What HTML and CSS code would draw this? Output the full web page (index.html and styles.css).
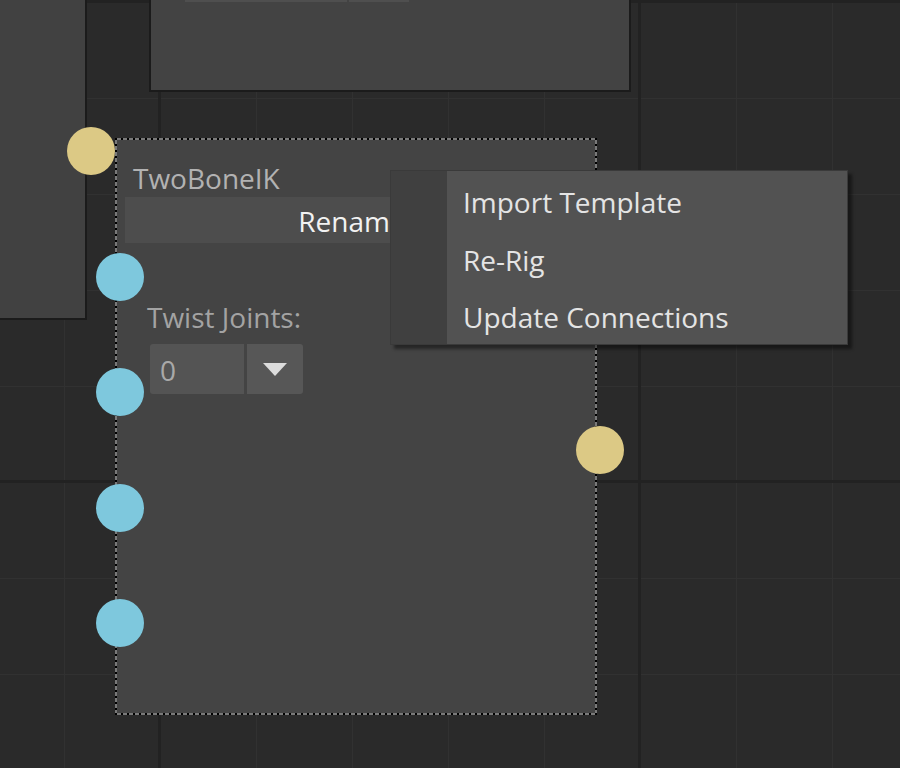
FILE: index.html
```html
<!DOCTYPE html>
<html>
<head>
<meta charset="utf-8">
<link rel="stylesheet" href="styles.css">
</head>
<body>
<div class="canvas">
  <div class="node node-left"></div>
  <div class="node node-top"><div class="top-strip"><span class="strip-a"></span><span class="strip-b"></span></div></div>

  <div class="node node-main">
    <div class="node-title">TwoBoneIK</div>
    <div class="rename-btn">Rename</div>
    <div class="field">
      <div class="field-label">Twist Joints:</div>
      <div class="combo">
        <div class="combo-value">0</div>
        <div class="combo-arrow"><span class="tri"></span></div>
      </div>
    </div>
  </div>

  <span class="port port-out port-in-top"></span>
  <span class="port port-out port-out-right"></span>
  <span class="port port-in p1"></span>
  <span class="port port-in p2"></span>
  <span class="port port-in p3"></span>
  <span class="port port-in p4"></span>

  <div class="menu">
    <div class="menu-gutter"></div>
    <ul class="menu-items">
      <li>Import Template</li>
      <li>Re-Rig</li>
      <li>Update Connections</li>
    </ul>
  </div>
</div>
</body>
</html>
```
FILE: styles.css
```css
html, body {
  margin: 0;
  padding: 0;
}
body {
  width: 900px;
  height: 768px;
  overflow: hidden;
  font-family: "Open Sans", "Noto Sans", sans-serif;
}
.canvas {
  position: relative;
  width: 900px;
  height: 768px;
  background-color: #2a2a2a;
  background-image:
    linear-gradient(90deg, #222222 3px, transparent 3px),
    linear-gradient(#222222 3px, transparent 3px),
    linear-gradient(90deg, #313131 1px, transparent 1px),
    linear-gradient(#313131 1px, transparent 1px);
  background-size: 480px 100%, 100% 480px, 96px 100%, 100% 96px;
  background-position: 158px 0, 0 0, 64px 0, 0 2px;
}
.node {
  position: absolute;
  box-sizing: border-box;
}
.node-left {
  left: 0;
  top: 0;
  width: 87px;
  height: 320px;
  background: #414141;
  border-right: 2px solid #1b1b1b;
  border-bottom: 2px solid #1b1b1b;
}
.node-top {
  left: 149px;
  top: 0;
  width: 482px;
  height: 92px;
  background: #434343;
  border: 2px solid #1b1b1b;
  border-top: none;
}
.top-strip {
  display: flex;
  margin-left: 34px;
  width: 224px;
  height: 2px;
  gap: 2px;
}
.strip-a { flex: 0 0 162px; background: #4f4f4f; }
.strip-b { flex: 1; background: #4f4f4f; }

.node-main {
  left: 115px;
  top: 138px;
  width: 482px;
  height: 577px;
  background: #444444;
  padding: 22px 10px 0 10px;
  display: flex;
  flex-direction: column;
}
.node-main::before {
  content: "";
  position: absolute;
  inset: 0;
  pointer-events: none;
  background:
    repeating-linear-gradient(90deg, #000 0 2px, #7a7a7a 2px 6px) top left / 100% 2px no-repeat,
    repeating-linear-gradient(90deg, #000 0 2px, #7a7a7a 2px 6px) bottom left / 100% 2px no-repeat,
    repeating-linear-gradient(180deg, #000 0 2px, #7a7a7a 2px 6px) top left / 2px 100% no-repeat,
    repeating-linear-gradient(180deg, #000 0 2px, #7a7a7a 2px 6px) top right / 2px 100% no-repeat;
}
.node-title {
  color: #b2b2b2;
  font-size: 28px;
  line-height: 36px;
  padding-left: 8px;
}
.rename-btn {
  height: 46px;
  margin-top: 1px;
  background: #4d4d4d;
  color: #f2f2f2;
  font-size: 28px;
  line-height: 48px;
  text-align: center;
  padding-right: 8px;
}
.field {
  padding-left: 22px;
  margin-top: 56px;
  display: flex;
  flex-direction: column;
  gap: 9px;
}
.field-label {
  color: #a3a3a3;
  font-size: 28px;
  line-height: 36px;
}
.combo {
  display: flex;
  gap: 3px;
  margin-left: 3px;
  height: 50px;
}
.combo-value {
  width: 94px;
  background: #545454;
  border-radius: 3px 0 0 3px;
  color: #a9a9a9;
  font-size: 28px;
  line-height: 52px;
  padding-left: 10px;
  box-sizing: border-box;
}
.combo-arrow {
  width: 56px;
  background: #575757;
  border-radius: 0 3px 3px 0;
  display: flex;
  align-items: center;
  justify-content: center;
}
.tri {
  width: 0;
  height: 0;
  border-left: 12.5px solid transparent;
  border-right: 12.5px solid transparent;
  border-top: 13px solid #dcdcdc;
}

.port {
  position: absolute;
  width: 48px;
  height: 48px;
  border-radius: 50%;
}
.port-out { background: #dcc985; }
.port-in { background: #7ec8dd; left: 96px; }
.port-in-top { left: 67px; top: 127px; }
.port-out-right { left: 576px; top: 426px; }
.p1 { top: 253px; }
.p2 { top: 368px; }
.p3 { top: 484px; }
.p4 { top: 599px; }

.menu {
  position: absolute;
  left: 390px;
  top: 170px;
  width: 458px;
  height: 175px;
  box-sizing: border-box;
  border: 1px solid #3a3a3a;
  background: #525252;
  box-shadow: 4px 4px 3px rgba(0, 0, 0, 0.45);
  display: flex;
}
.menu-gutter {
  width: 56px;
  background: #404040;
}
.menu-items {
  list-style: none;
  margin: 0;
  padding: 3px 0 0 16px;
  flex: 1;
  color: #e4e4e4;
  font-size: 28px;
}
.menu-items li {
  height: 57.5px;
  line-height: 57.5px;
}
```
